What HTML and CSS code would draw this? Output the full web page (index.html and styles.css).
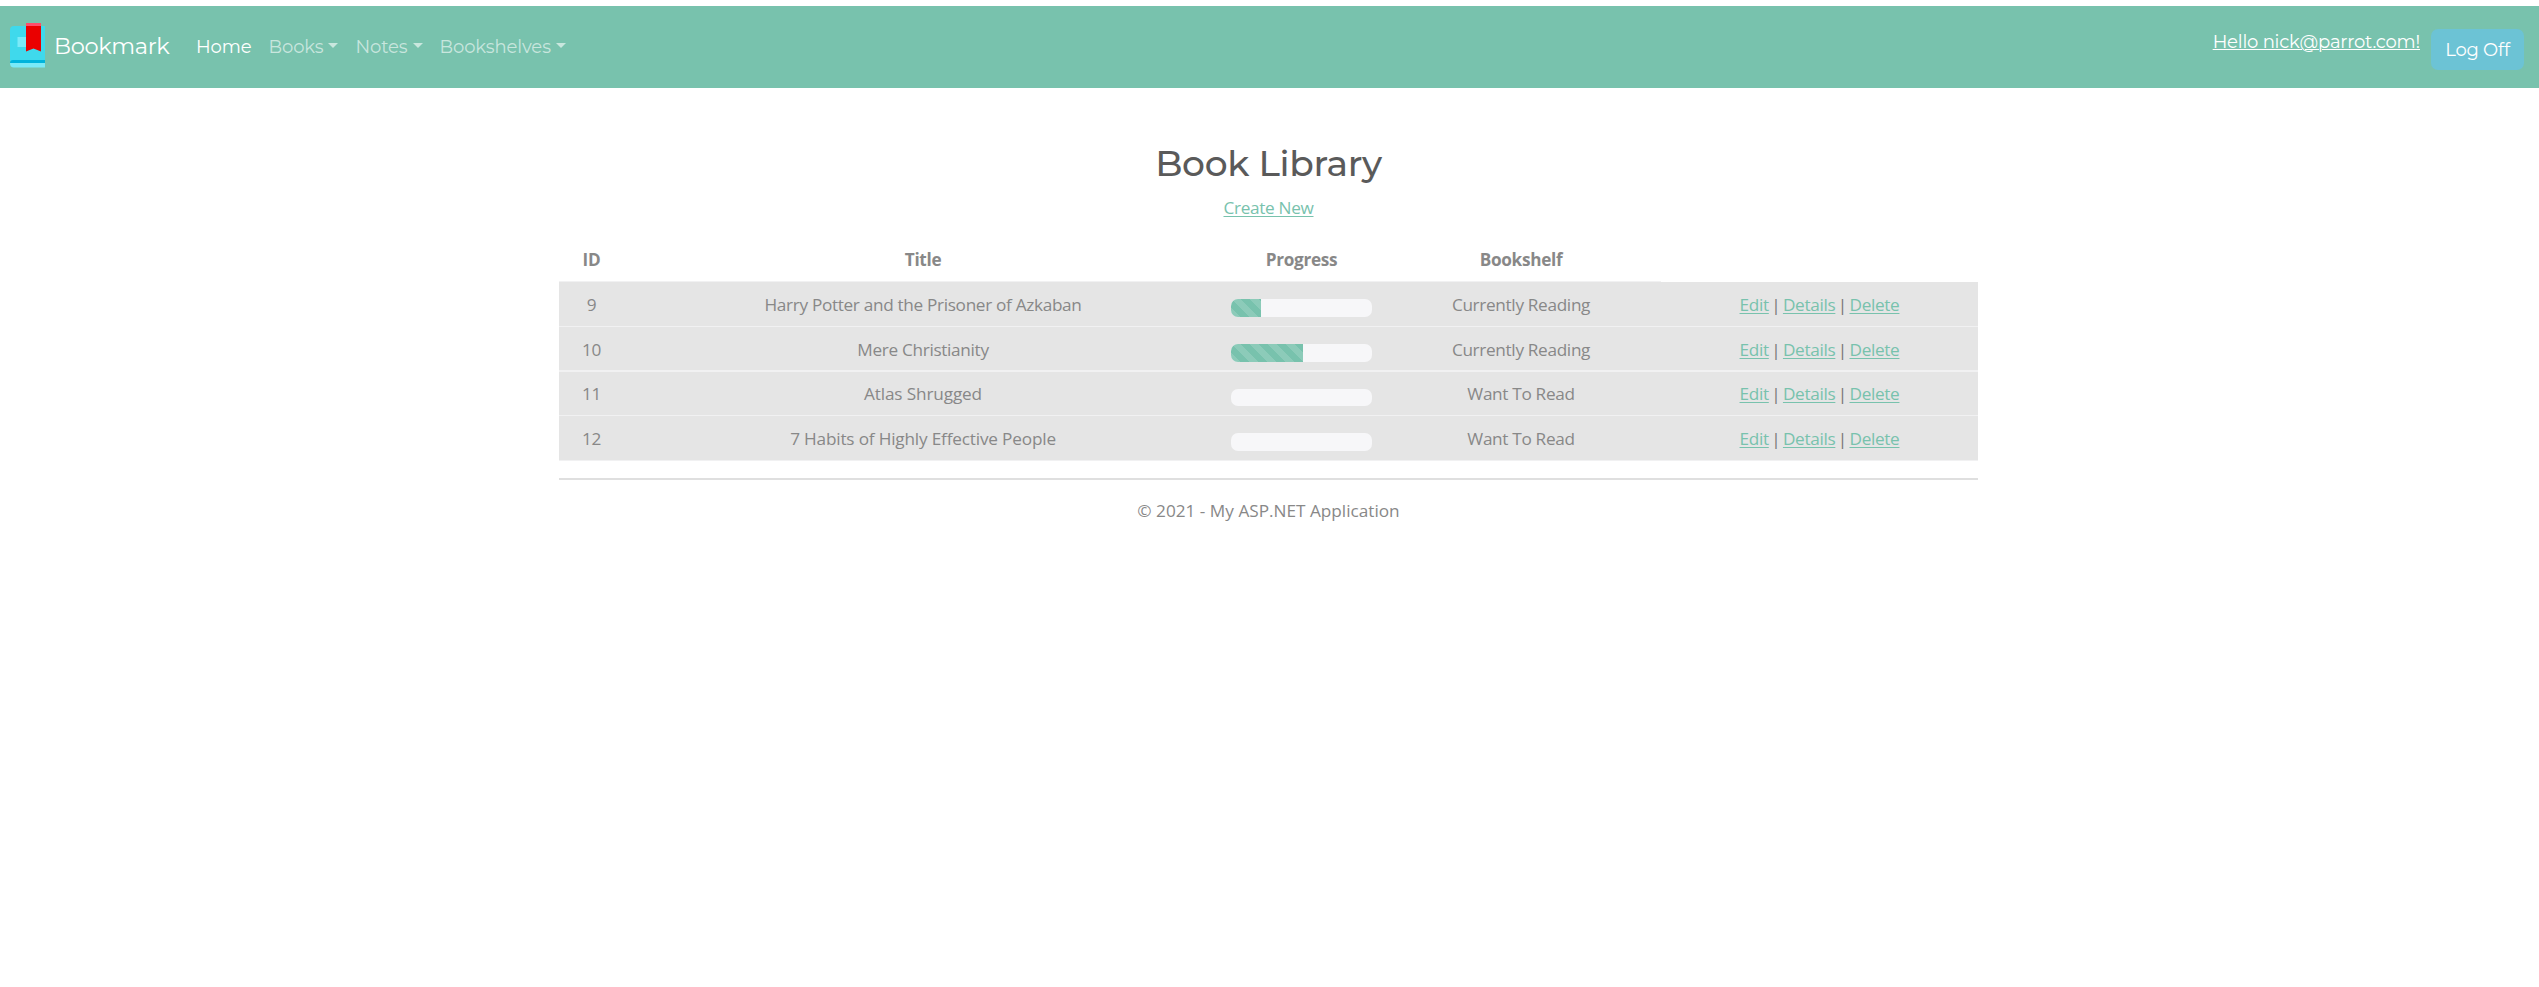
FILE: index.html
```
<!DOCTYPE html>
<html lang="en">
<head>
<meta charset="utf-8">
<title>Book Library</title>
<link rel="stylesheet" href="styles.css">
</head>
<body>
<nav class="navbar">
  <a class="brand">
    <svg class="logo" width="36" height="45" viewBox="0 0 36 45">
      <path fill="#3fd9ec" d="M4 3H35V38H0V7Q0 3 4 3Z"/>
      <path fill="#7aeaf8" d="M7.500 14H17V24H7.500ZM0 40H35V44.500H4Q0 44.500 0 40Z"/>
      <path fill="#00b4dc" d="M3 37H35V40H0Q0 37 3 37Z"/>
      <path fill="#ea0000" d="M16 0H31V28.500L23.500 25.500 16 28.500Z"/>
      <path fill="#ff4d6b" d="M16 0H31V3H16Z"/>
    </svg>
    <span class="brand-name">Bookmark</span>
  </a>
  <a class="nav-link active">Home</a>
  <a class="nav-link books">Books<i class="caret"></i></a>
  <a class="nav-link notes">Notes<i class="caret"></i></a>
  <a class="nav-link shelves">Bookshelves<i class="caret"></i></a>
  <div class="account">
    <a class="hello">Hello nick@parrot.com!</a>
    <button class="logoff">Log Off</button>
  </div>
</nav>
<main class="container">
  <h2 class="heading">Book Library</h2>
  <p class="create"><a class="link">Create New</a></p>
  <div class="table">
    <div class="row head"><b>ID</b><b>Title</b><b>Progress</b><b>Bookshelf</b><span></span></div>
    <div class="row"><span>9</span><span>Harry Potter and the Prisoner of Azkaban</span><div class="progress"><div class="bar" style="width:30px"></div></div><span>Currently Reading</span><div class="actions"><a class="link">Edit</a>|<a class="link">Details</a>|<a class="link">Delete</a></div></div>
    <div class="row thick"><span>10</span><span>Mere Christianity</span><div class="progress"><div class="bar" style="width:72px"></div></div><span>Currently Reading</span><div class="actions"><a class="link">Edit</a>|<a class="link">Details</a>|<a class="link">Delete</a></div></div>
    <div class="row short"><span>11</span><span class="atlas">Atlas Shrugged</span><div class="progress"></div><span>Want To Read</span><div class="actions"><a class="link">Edit</a>|<a class="link">Details</a>|<a class="link">Delete</a></div></div>
    <div class="row"><span>12</span><span class="habits">7 Habits of Highly Effective People</span><div class="progress"></div><span>Want To Read</span><div class="actions"><a class="link">Edit</a>|<a class="link">Details</a>|<a class="link">Delete</a></div></div>
  </div>
  <hr class="rule">
  <footer class="footer">© 2021 - My ASP.NET Application</footer>
</main>
</body>
</html>
```
FILE: styles.css
```
* { box-sizing: border-box; }
body { margin: 0; padding-top: 6px; background: #fff; color: #888; font: 17.2px/27px "Segoe UI", "Open Sans", sans-serif; letter-spacing: -0.32px; }
.navbar { display: flex; align-items: center; height: 82px; padding: 0 15px 0 10px; background: #78c2ad; font: 18px/27px Montserrat, sans-serif; letter-spacing: -0.1px; }
.brand { display: flex; align-items: center; width: 186px; height: 82px; color: #fff; }
.logo { display: block; margin: 0 8px 4px 0; }
.brand-name { padding-bottom: 2px; font-size: 22.5px; letter-spacing: -0.3px; }
.nav-link { display: flex; padding-top: 1px; color: rgba(255, 255, 255, 0.6); }
.nav-link.active { width: 72.5px; color: #fff; }
.nav-link.books { width: 87px; }
.nav-link.notes { width: 84px; }
.caret { width: 10px; height: 5px; margin: 9px 0 0 5px; border: solid transparent; border-width: 5px 5px 0; border-top-color: rgba(255, 255, 255, 0.6); }
.account { display: flex; gap: 11px; margin-left: auto; color: #fff; }
.hello { padding-top: 4px; letter-spacing: -0.2px; text-decoration: underline; text-decoration-thickness: 1px; }
.logoff { width: 93px; height: 41px; margin-top: 4px; padding: 2px 0 0; border: 0; border-radius: 7px; background: #6cc3d5; color: #fff; font: inherit; letter-spacing: -0.2px; }
.container { width: 1419px; margin: 0 0 0 559px; text-align: center; }
.heading { margin: 0; padding-top: 54px; color: #5a5a5a; font: 500 36px/43px Montserrat, sans-serif; letter-spacing: -0.3px; }
.create { margin: 9px 0 16px; }
.link { color: #78c2ad; text-decoration: underline; text-decoration-thickness: 1px; text-underline-offset: 2px; }
.row { display: grid; grid-template-columns: 65px 598px 159px 280px 1fr; height: 45px; padding-top: 9px; border-bottom: 1px solid #f1f1f2; background: #e5e5e5; }
.row.head { border-bottom: 0; background: linear-gradient(#f1f1f2, #f1f1f2) left bottom / 1102px 1px no-repeat #fff; }
.row.thick { border-bottom-width: 2px; }
.row.short { height: 44px; padding-top: 8px; }
.progress { height: 18px; margin: 8px 9px 0; border-radius: 7px; background: #f7f7f9; overflow: hidden; }
.short .progress { height: 17px; margin-top: 9px; }
.bar { height: 18px; background: linear-gradient(45deg, rgba(255,255,255,.15) 25%, transparent 25%, transparent 50%, rgba(255,255,255,.15) 50%, rgba(255,255,255,.15) 75%, transparent 75%) 0 0 / 18px 18px #78c2ad; }
.atlas { letter-spacing: -0.14px; }
.habits { letter-spacing: -0.18px; }
.actions { display: flex; justify-content: center; gap: 2.5px; color: #777; }
.rule { height: 2px; margin: 17px 0 17px; border: 0; background: #dfdfdf; }
.footer { letter-spacing: 0; }
```
